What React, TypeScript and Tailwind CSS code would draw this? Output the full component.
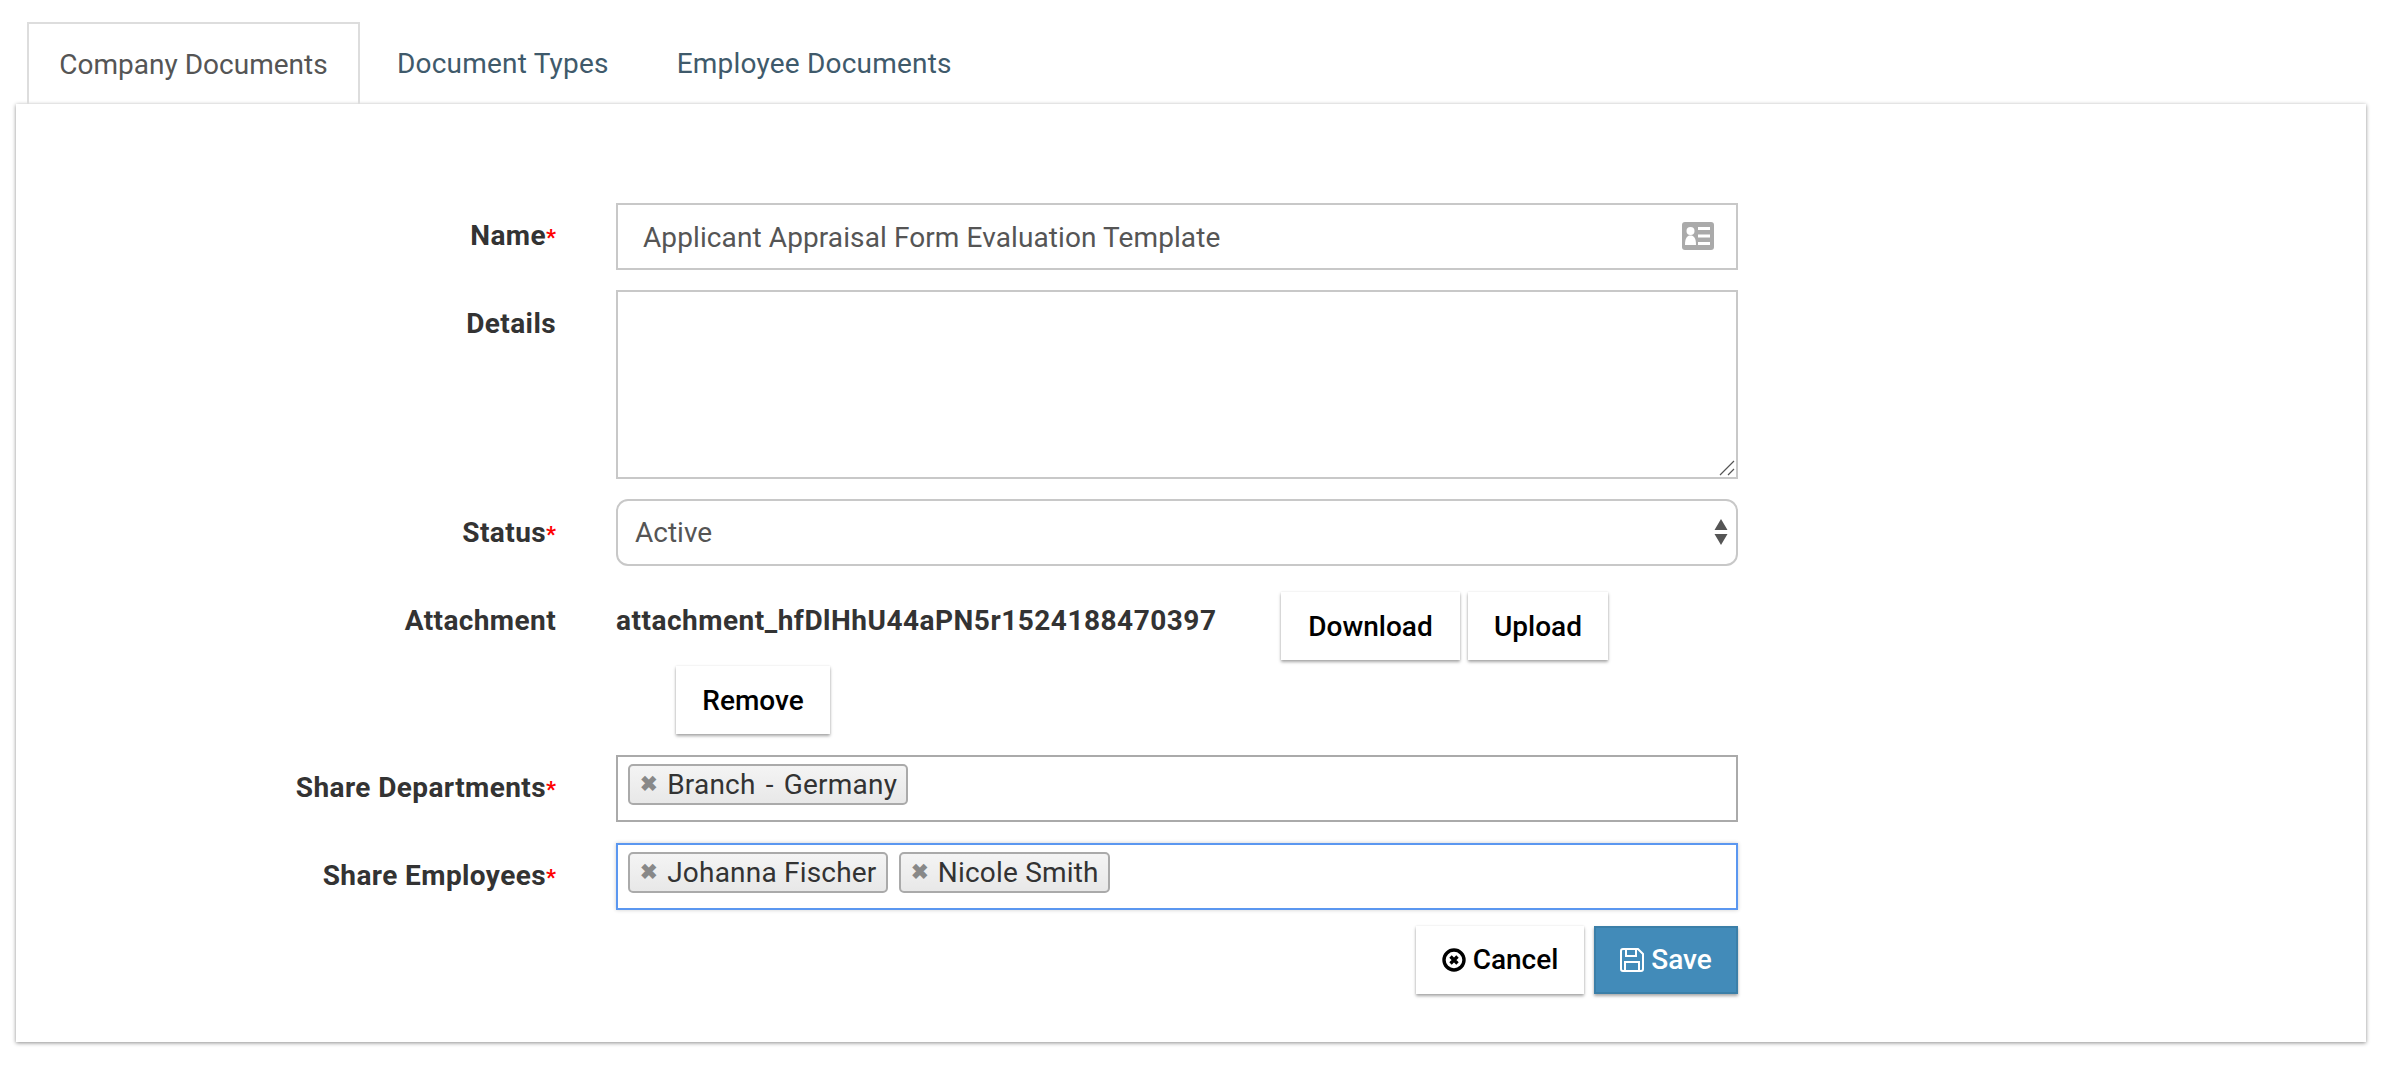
function Label({ text, required, className }: { text: string; required?: boolean; className?: string }) {
  return (
    <label className={`w-[540px] shrink-0 mr-[60px] text-right text-[28px] tracking-[0.4px] leading-[36px] font-bold text-[#333333] ${className ?? 'pt-[15px]'}`}>
      {text}
      {required && <span className="text-[#ff0000] text-[22px] tracking-normal">*</span>}
    </label>
  )
}

function RaisedButton({ text, className }: { text: string; className: string }) {
  return (
    <button className={`h-[68px] pt-[2px] bg-white text-[28px] font-medium text-black shadow-[0_2px_3px_rgba(0,0,0,0.35),0_0_2px_rgba(0,0,0,0.08)] ${className}`}>
      {text}
    </button>
  )
}

function Chip({ text, className }: { text: string; className?: string }) {
  return (
    <span className={`flex items-center h-[41px] pl-[10px] pr-[9px] gap-[9px] rounded-[5px] border-2 border-[#aaaaaa] bg-gradient-to-b from-[#f4f4f4] to-[#e8e8e8] text-[28px] tracking-[0.2px] text-[#333333] ${className ?? ''}`}>
      <span className="text-[#888888] text-[21px] font-bold leading-none">✖</span>
      {text}
    </span>
  )
}

export default function App() {
  return (
    <div className="w-[2392px] h-[1066px] bg-white font-['Roboto',sans-serif] overflow-hidden">
      {/* tabs */}
      <div className="flex pt-[22px] pl-[27px] h-[104px] text-[28px] leading-[36px]">
        <div className="h-[82px] w-[333px] border-2 border-b-0 border-[#dddddd] flex items-center justify-center pt-[2px] text-[#555555]">
          Company Documents
        </div>
        <div className="h-[82px] flex items-center pt-[2px] pl-[37px] tracking-[0.2px] text-[#3f5a6b]">Document Types</div>
        <div className="h-[82px] flex items-center pt-[2px] pl-[68px] tracking-[0.2px] text-[#3f5a6b]">Employee Documents</div>
      </div>

      {/* form panel */}
      <div className="mx-[16px] w-[2350px] h-[938px] bg-white pt-[99px] shadow-[0_1px_4px_rgba(0,0,0,0.45)]">
        <div className="flex h-[87px]">
          <Label text="Name" required />
          <div className="relative w-[1122px] h-[67px] border-2 border-[#c8c8c8] flex items-center pl-[25px] pt-[2px] text-[28px] tracking-[0.1px] text-[#555555]">
            Applicant Appraisal Form Evaluation Template
            <svg className="absolute right-[22px] top-[17px]" width="32" height="28" viewBox="0 0 32 28">
              <rect width="32" height="28" rx="3" fill="#aaaaaa" />
              <circle cx="8.5" cy="9" r="4" fill="#ffffff" />
              <path d="M3 23 C3 16 5 13.5 8.5 13.5 C12 13.5 14 16 14 23 Z" fill="#ffffff" />
              <path d="M16 5h12v3H16zM16 12.5h12v3H16zM16 20h12v3H16z" fill="#ffffff" />
            </svg>
          </div>
        </div>

        <div className="flex h-[209px]">
          <Label text="Details" className="pt-[16px]" />
          <div className="relative w-[1122px] h-[189px]">
            <textarea className="block w-full h-full border-2 border-[#c8c8c8] outline-none resize-none" />
            <svg className="absolute right-[3px] bottom-[3px]" width="16" height="16" viewBox="0 0 16 16">
              <path d="M1 15 L15 1 M9 15 L15 9" stroke="#555555" strokeWidth="1.2" />
            </svg>
          </div>
        </div>

        <div className="flex h-[93px]">
          <Label text="Status" required className="pt-[16px]" />
          <div className="relative w-[1122px] h-[67px] border-2 border-[#c8c8c8] rounded-[12px] flex items-center pl-[17px] text-[28px] text-[#555555]">
            Active
            <svg className="absolute right-[8px] top-[18px]" width="14" height="26" viewBox="0 0 14 26">
              <path d="M7 0 L13.5 11 L0.5 11 Z M0.5 15 L13.5 15 L7 26 Z" fill="#555555" />
            </svg>
          </div>
        </div>

        <div className="flex h-[74px]">
          <Label text="Attachment" className="pt-[11px]" />
          <div className="w-[665px] shrink-0 pt-[11px] text-[28px] tracking-[0.5px] leading-[36px] font-bold text-[#333333]">
            attachment_hfDlHhU44aPN5r1524188470397
          </div>
          <div className="flex gap-[8px]">
            <RaisedButton text="Download" className="w-[179px]" />
            <RaisedButton text="Upload" className="w-[140px]" />
          </div>
        </div>

        <div className="pl-[660px] h-[89px]">
          <RaisedButton text="Remove" className="w-[154px]" />
        </div>

        <div className="flex h-[88px]">
          <Label text="Share Departments" required />
          <div className="w-[1122px] h-[67px] border-2 border-[#aaaaaa] pl-[10px] pt-[7px] flex items-start gap-[11px]">
            <Chip text="Branch - Germany" className="[word-spacing:3px]" />
          </div>
        </div>

        <div className="flex h-[83px]">
          <Label text="Share Employees" required />
          <div className="w-[1122px] h-[67px] border-2 border-[#5b97f0] pl-[10px] pt-[7px] flex items-start gap-[11px] shadow-[0_0_4px_rgba(0,0,0,0.2)]">
            <Chip text="Johanna Fischer" />
            <Chip text="Nicole Smith" />
          </div>
        </div>

        <div className="flex justify-end gap-[10px] w-[1722px]">
          <button className="h-[68px] w-[168px] flex items-center justify-center gap-[7px] bg-white text-[28px] font-medium text-black shadow-[0_2px_3px_rgba(0,0,0,0.35),0_0_2px_rgba(0,0,0,0.08)]">
            <svg width="24" height="24" viewBox="0 0 24 24">
              <circle cx="12" cy="12" r="10" fill="none" stroke="#000000" strokeWidth="3.4" />
              <path d="M8.5 8.5 L15.5 15.5 M15.5 8.5 L8.5 15.5" stroke="#000000" strokeWidth="3.4" />
            </svg>
            Cancel
          </button>
          <button className="h-[68px] w-[144px] flex items-center justify-center gap-[7px] bg-[#428bb9] border-2 border-[#3b7fa8] text-[28px] font-medium text-white shadow-[0_2px_3px_rgba(0,0,0,0.35)]">
            <svg width="24" height="24" viewBox="0 0 24 24" fill="none" stroke="#ffffff" strokeWidth="2">
              <path d="M1 3 a2 2 0 0 1 2-2 H18 L23 6 V21 a2 2 0 0 1-2 2 H3 a2 2 0 0 1-2-2 Z" />
              <path d="M6 1 V8 H16 V1 M5 23 V14 H19 V23" />
            </svg>
            Save
          </button>
        </div>
      </div>
    </div>
  )
}
